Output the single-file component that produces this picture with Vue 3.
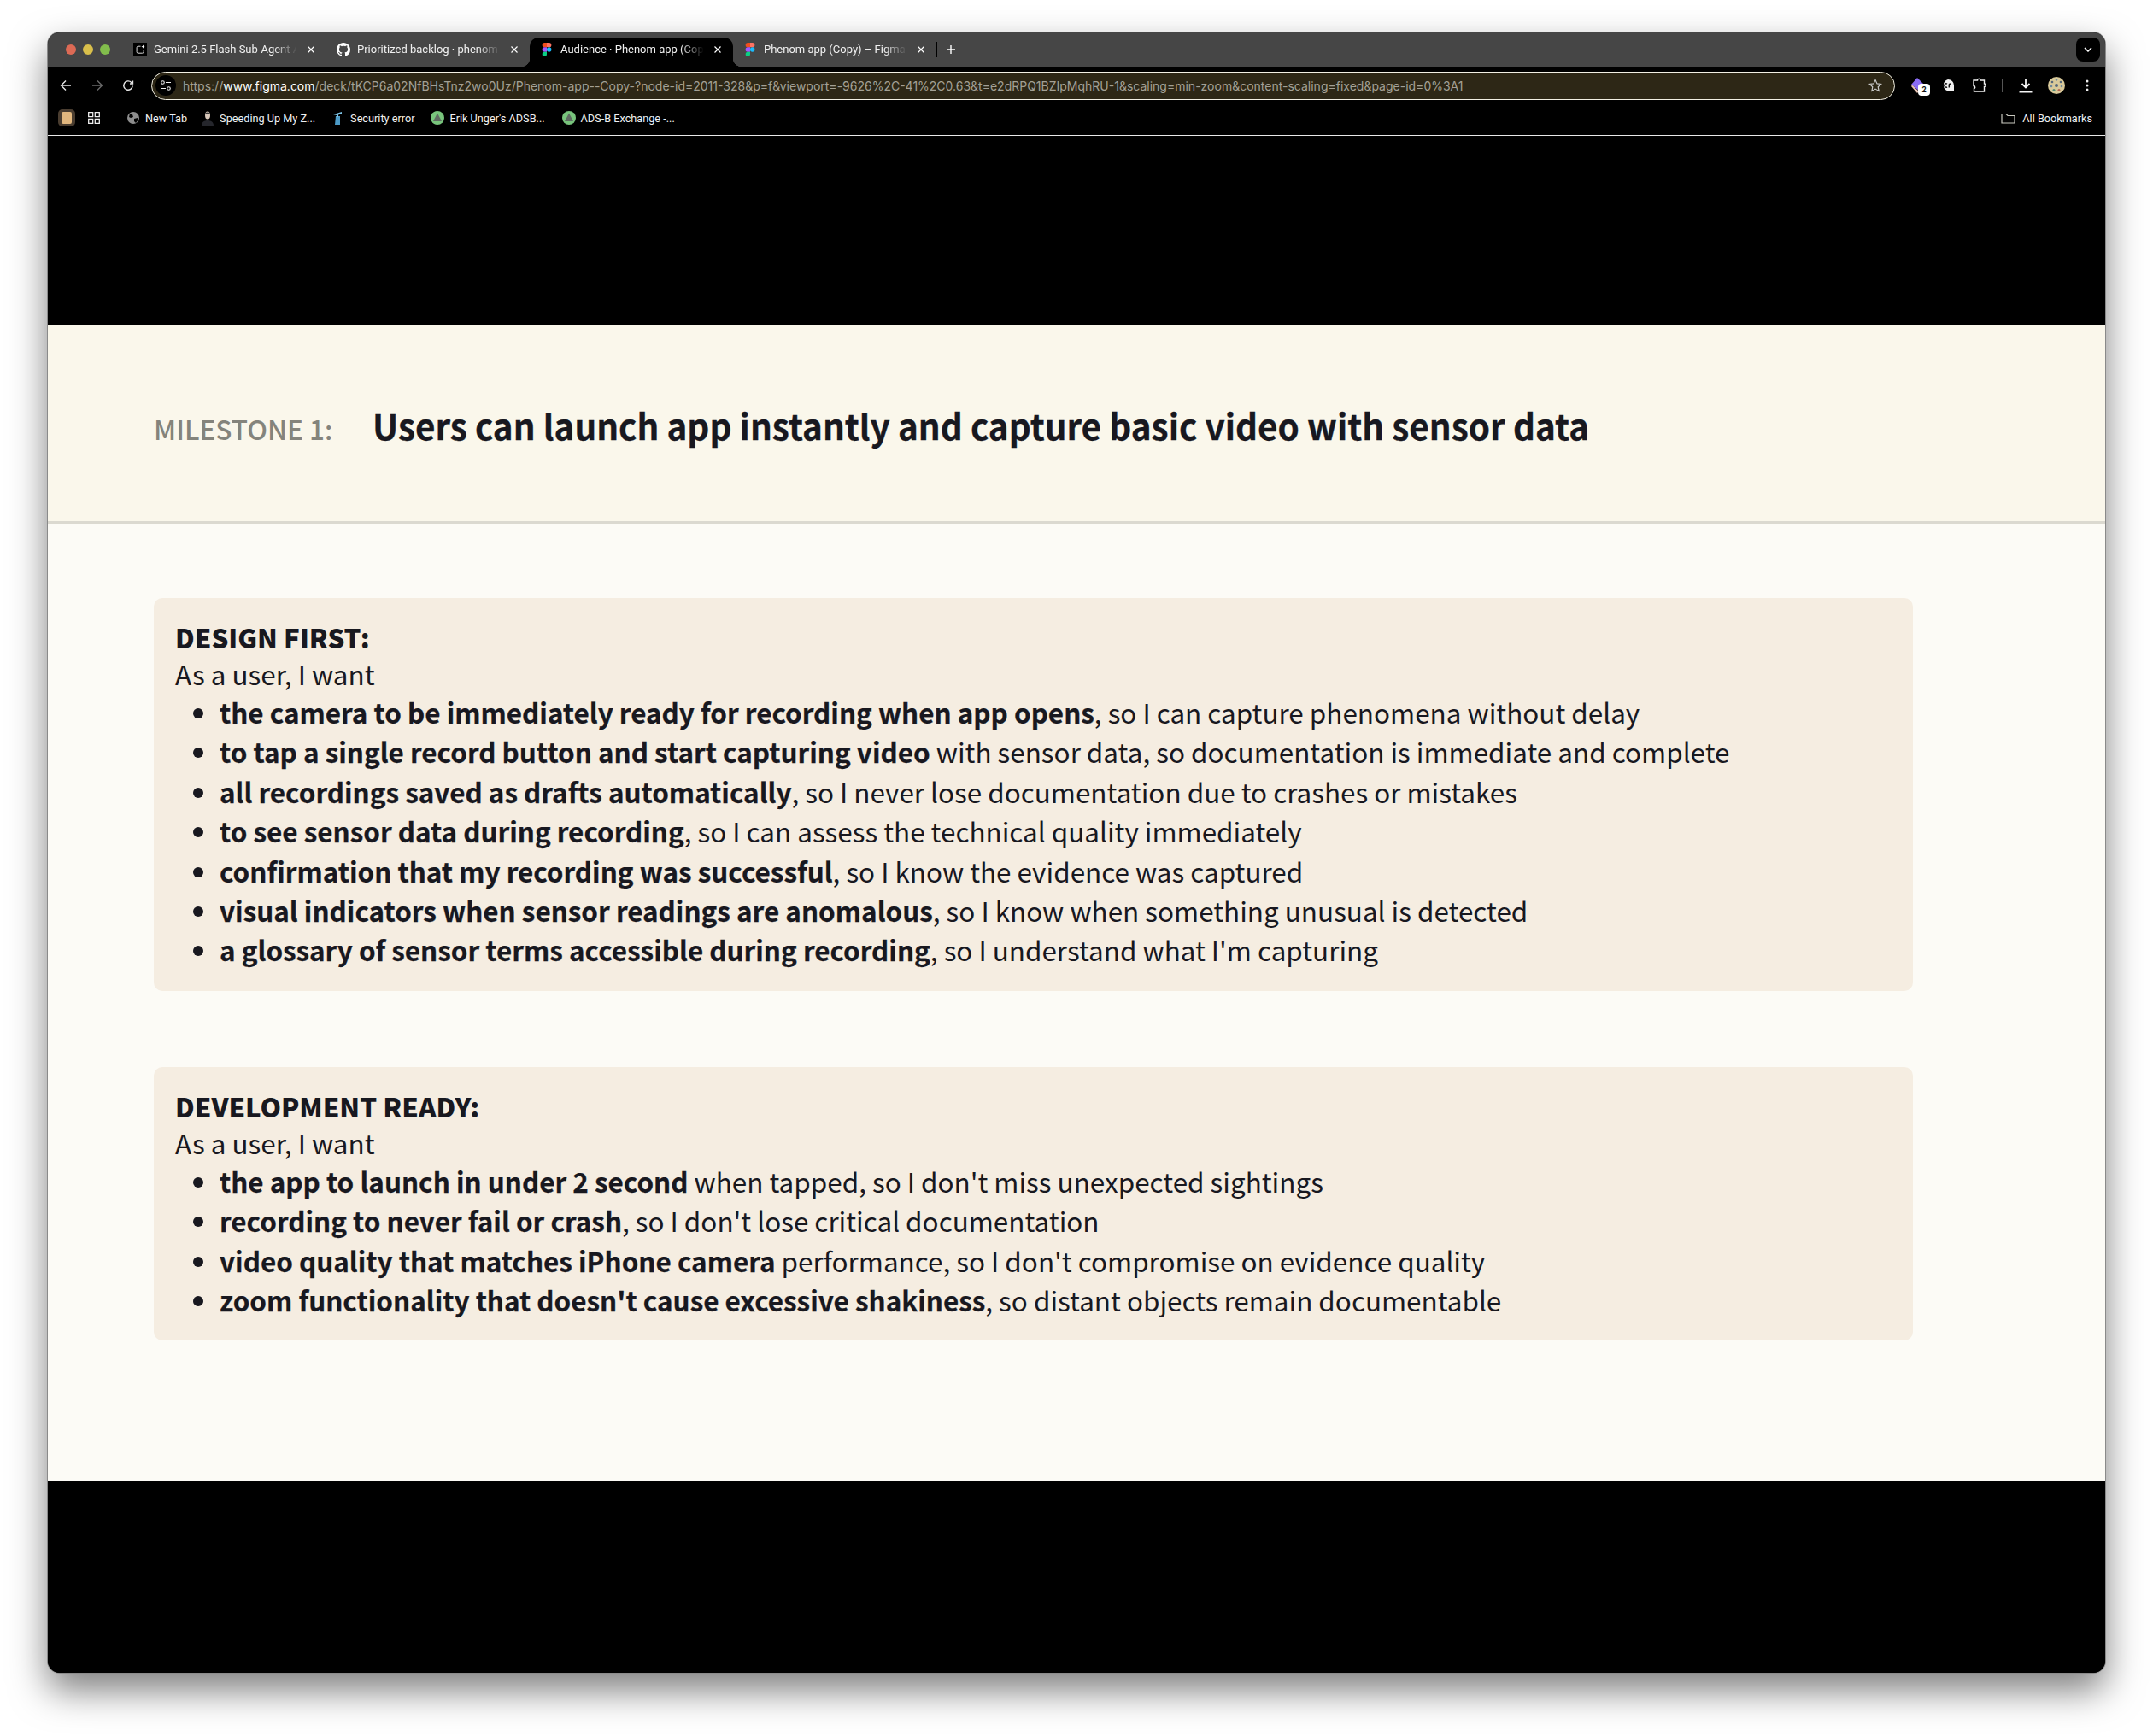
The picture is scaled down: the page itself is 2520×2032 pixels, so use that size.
<script setup>
const cards = [
  {
    title: 'DESIGN FIRST:',
    items: [
      ['the camera to be immediately ready for recording when app opens', ', so I can capture phenomena without delay'],
      ['to tap a single record button and start capturing video', ' with sensor data, so documentation is immediate and complete'],
      ['all recordings saved as drafts automatically', ', so I never lose documentation due to crashes or mistakes'],
      ['to see sensor data during recording', ', so I can assess the technical quality immediately'],
      ['confirmation that my recording was successful', ', so I know the evidence was captured'],
      ['visual indicators when sensor readings are anomalous', ', so I know when something unusual is detected'],
      ['a glossary of sensor terms accessible during recording', ", so I understand what I'm capturing"],
    ],
  },
  {
    title: 'DEVELOPMENT READY:',
    items: [
      ['the app to launch in under 2 second', " when tapped, so I don't miss unexpected sightings"],
      ['recording to never fail or crash', ", so I don't lose critical documentation"],
      ['video quality that matches iPhone camera', " performance, so I don't compromise on evidence quality"],
      ["zoom functionality that doesn't cause excessive shakiness", ', so distant objects remain documentable'],
    ],
  },
]
const tabs = [
  { title: 'Gemini 2.5 Flash Sub-Agent Architecture', icon: 'gemini' },
  { title: 'Prioritized backlog · phenom-app', icon: 'github' },
  { title: 'Audience · Phenom app (Copy) – Figma', icon: 'figma', active: true },
  { title: 'Phenom app (Copy) – Figma Slides', icon: 'figma' },
]
</script>

<template>
  <div class="window">
    <div class="tabstrip">
      <div class="lights"><i class="red"></i><i class="yellow"></i><i class="green"></i></div>
      <div v-for="t in tabs" :key="t.title" class="tab" :class="{ active: t.active }">
        <svg v-if="t.icon === 'gemini'" class="fav" viewBox="0 0 16 16">
          <rect width="16" height="16" fill="#000" />
          <path d="M8.5 4.2H5.6a1.5 1.5 0 0 0-1.5 1.5v5a1.5 1.5 0 0 0 1.5 1.5h5a1.5 1.5 0 0 0 1.5-1.5V8" fill="none" stroke="#ddd" stroke-width="1" />
          <path d="M11.5 2.6l.6 1.5 1.5.6-1.5.6-.6 1.5-.6-1.5-1.5-.6 1.5-.6z" fill="#fff" />
        </svg>
        <svg v-else-if="t.icon === 'github'" class="fav" viewBox="0 0 16 16">
          <path fill="#fff" d="M8 0C3.58 0 0 3.58 0 8c0 3.54 2.29 6.53 5.47 7.59.4.07.55-.17.55-.38 0-.19-.01-.82-.01-1.49-2.01.37-2.53-.49-2.69-.94-.09-.23-.48-.94-.82-1.13-.28-.15-.68-.52-.01-.53.63-.01 1.08.58 1.23.82.72 1.21 1.87.87 2.33.66.07-.52.28-.87.51-1.07-1.78-.2-3.64-.89-3.64-3.95 0-.87.31-1.59.82-2.15-.08-.2-.36-1.02.08-2.12 0 0 .67-.21 2.2.82.64-.18 1.32-.27 2-.27.68 0 1.36.09 2 .27 1.53-1.04 2.2-.82 2.2-.82.44 1.1.16 1.92.08 2.12.51.56.82 1.27.82 2.15 0 3.07-1.87 3.75-3.65 3.95.29.25.54.73.54 1.48 0 1.07-.01 1.93-.01 2.2 0 .21.15.46.55.38A8.013 8.013 0 0 0 16 8c0-4.42-3.58-8-8-8z" />
        </svg>
        <svg v-else class="fav" viewBox="0 0 16 16">
          <path d="M5.300 0h2.700v5.300H5.300a2.650 2.650 0 0 1 0-5.300z" fill="#f24e1e" />
          <path d="M8 0h2.700a2.650 2.650 0 0 1 0 5.300H8z" fill="#ff7262" />
          <path d="M5.300 5.300H8v5.400H5.300a2.700 2.700 0 0 1 0-5.400z" fill="#a259ff" />
          <circle cx="10.700" cy="8" r="2.700" fill="#1abcfe" />
          <path d="M5.300 10.700H8v2.650a2.650 2.650 0 1 1-2.700-2.650z" fill="#0acf83" />
        </svg>
        <span class="tabtitle">{{ t.title }}</span>
        <svg class="close" viewBox="0 0 10 10"><path d="M1.500 1.500l7 7M8.500 1.500l-7 7" stroke="#fff" stroke-width="1.200" /></svg>
      </div>
      <b class="divider"></b>
      <svg class="plus" viewBox="0 0 12 12"><path d="M6 1v10M1 6h10" stroke="#fff" stroke-width="1.400" /></svg>
      <div class="chev"><svg viewBox="0 0 10 6" width="10" height="6"><path d="M1 1l4 4 4-4" fill="none" stroke="#fff" stroke-width="1.500" /></svg></div>
    </div>

    <div class="toolbar">
      <svg class="nav" viewBox="0 0 16 16"><path d="M14 8H2.500M8 2.500L2.500 8 8 13.500" fill="none" stroke="#e6e6e6" stroke-width="1.400" /></svg>
      <svg class="nav" viewBox="0 0 16 16"><path d="M2 8h11.500M8 2.500L13.500 8 8 13.500" fill="none" stroke="#6a6a6a" stroke-width="1.400" /></svg>
      <svg class="nav reload" viewBox="0 0 16 16"><path d="M13.200 8.400a5.200 5.200 0 1 1-1.500-4L13.500 6M13.500 2.400V6H10" fill="none" stroke="#e6e6e6" stroke-width="1.400" /></svg>
      <div class="omnibox">
        <span class="chip">
          <svg viewBox="0 0 14 14" width="14" height="14"><circle cx="3.500" cy="3.500" r="1.800" fill="none" stroke="#eee" stroke-width="1.100" /><path d="M7 3.500h6M1 10.500h6" stroke="#eee" stroke-width="1.100" /><circle cx="10.500" cy="10.500" r="1.800" fill="none" stroke="#eee" stroke-width="1.100" /></svg>
        </span>
        <span class="url">https://<em>www.figma.com</em>/deck/tKCP6a02NfBHsTnz2wo0Uz/Phenom-app--Copy-?node-id=2011-328&amp;p=f&amp;viewport=-9626%2C-41%2C0.63&amp;t=e2dRPQ1BZIpMqhRU-1&amp;scaling=min-zoom&amp;content-scaling=fixed&amp;page-id=0%3A1</span>
        <svg class="star" viewBox="0 0 16 16"><path d="M8 1.600l2 4.300 4.700.6-3.500 3.200.9 4.700L8 12.100l-4.100 2.300.9-4.700L1.300 6.500l4.700-.6z" fill="none" stroke="#c8c8c8" stroke-width="1.200" /></svg>
      </div>
      <div class="tools">
        <div class="extwrap">
          <svg width="18" height="20" viewBox="0 0 18 20"><path d="M9 1l8 8-6 7-9-7z" fill="#8a6cf4" /><path d="M3 9.500l8 7.500-2 2-7-8z" fill="#e8c5b5" /></svg>
          <span class="badge">2</span>
        </div>
        <svg class="tool cr" width="16" height="16" viewBox="0 0 16 16"><path d="M8 1a7 7 0 0 1 7 7v6.500H8A7 7 0 0 1 8 1z" fill="#f2f2f2" /><path d="M7 6.200a2.100 2.100 0 1 0 0 3.600M9.300 10.500V7.600c0-1 .7-1.500 2-1.500" fill="none" stroke="#111" stroke-width="1.500" /></svg>
        <svg class="tool puzzle" width="18" height="18" viewBox="0 0 18 18"><path d="M2 3h4.500c0-2.400 3.500-2.400 3.500 0H14.500v4c2.400 0 2.400 3.500 0 3.500v5.500H2.500v-3.500c1.700 0 1.700-3-.5-3z" fill="none" stroke="#f0f0f0" stroke-width="1.400" /></svg>
        <b class="vsep"></b>
        <svg class="tool dl" width="18" height="18" viewBox="0 0 18 18"><path d="M9 1v10M4.500 7L9 11.500 13.500 7M1.500 16.500h15" fill="none" stroke="#f4f4f4" stroke-width="1.800" /></svg>
        <svg class="tool avatar" width="20" height="20" viewBox="0 0 20 20">
          <circle cx="10" cy="10" r="10" fill="#d8c99a" />
          <circle cx="10" cy="10" r="2" fill="#56687a" /><circle cx="5" cy="6" r="1.300" fill="#56687a" /><circle cx="15" cy="6" r="1.300" fill="#56687a" /><circle cx="10" cy="3.500" r="1.200" fill="#6f8aa0" /><circle cx="4" cy="11" r="1.300" fill="#6f8aa0" /><circle cx="16" cy="11" r="1.300" fill="#6f8aa0" /><circle cx="7" cy="15.500" r="1.500" fill="#4f8a74" /><circle cx="13" cy="15.500" r="1.500" fill="#b5654f" />
        </svg>
        <svg class="tool kebab" width="4" height="14" viewBox="0 0 4 14"><circle cx="2" cy="2" r="1.500" fill="#eee" /><circle cx="2" cy="7" r="1.500" fill="#eee" /><circle cx="2" cy="12" r="1.500" fill="#eee" /></svg>
      </div>
    </div>

    <div class="bookmarks">
      <span class="tile"><i></i></span>
      <svg class="gridicon" width="14" height="14" viewBox="0 0 14 14"><path d="M.7.700h5v5h-5zM8.300.700h5v5h-5zM.7 8.300h5v5h-5zM8.300 8.300h5v5h-5z" fill="none" stroke="#eee" stroke-width="1.300" /></svg>
      <b class="bmsep"></b>
      <div class="bm first">
        <svg width="14" height="14" viewBox="0 0 14 14"><circle cx="7" cy="7" r="7" fill="#8d8d8d" /><path d="M3 2l3 1 1 3-3 1-2-1zM8 8l4-1 1 2-3 4-2-2z" fill="#000" /></svg>
        New Tab
      </div>
      <div class="bm face">
        <svg width="14" height="17" viewBox="0 0 14 17"><ellipse cx="7" cy="5" rx="3" ry="4.500" fill="#d9c8ba" /><path d="M4 3.500C4 .8 10 .8 10 3.500z" fill="#333" /><path d="M0 17c0-4 3-6 7-6s7 2 7 6z" fill="#25262c" /></svg>
        Speeding Up My Z...
      </div>
      <div class="bm sec">
        <svg width="12" height="17" viewBox="0 0 12 17"><path d="M4 6h5v10H3z" fill="#4c9bc7" /><path d="M1 4l10-3v2l-4 1.500V7H5V5z" fill="#7cc2e4" /></svg>
        Security error
      </div>
      <div class="bm adsb">
        <svg width="16" height="16" viewBox="0 0 16 16"><circle cx="8" cy="8" r="8" fill="#78c47c" /><path d="M8 2.500L13 12H3z" fill="#5f6b62" /></svg>
        Erik Unger's ADSB...
      </div>
      <div class="bm adsx">
        <svg width="16" height="16" viewBox="0 0 16 16"><circle cx="8" cy="8" r="8" fill="#78c47c" /><path d="M8 2.500L13 12H3z" fill="#5f6b62" /></svg>
        ADS-B Exchange -...
      </div>
      <b class="bmsep right"></b>
      <div class="bm all">
        <svg width="17" height="13" viewBox="0 0 17 13"><path d="M1 1.500h5l2 2h8v8.500H1z" fill="none" stroke="#c9c9c0" stroke-width="1.200" /></svg>
        All Bookmarks
      </div>
    </div>

    <main class="slide">
      <header class="head">
        <span class="label">MILESTONE 1:</span>
        <h1>Users can launch app instantly and capture basic video with sensor data</h1>
      </header>
      <section class="body">
        <article v-for="c in cards" :key="c.title" class="card">
          <div class="ctitle">{{ c.title }}</div>
          <div class="intro">As a user, I want</div>
          <ul>
            <li v-for="it in c.items" :key="it[0]"><strong>{{ it[0] }}</strong>{{ it[1] }}</li>
          </ul>
        </article>
      </section>
    </main>
    <div class="bottom"></div>
  </div>
</template>

<style>
html, body { background: #fff; }
</style>

<style scoped>
.window {
  box-sizing: border-box;
  width: 2408px;
  height: 1920px;
  margin: 38px 0 74px 56px;
  border-radius: 14px;
  background: #000;
  box-shadow: 0 0 0 1px #8a8a8a, 0 20px 44px rgba(0, 0, 0, .52);
  overflow: hidden;
  display: flex;
  flex-direction: column;
  font-family: "Roboto", "Liberation Sans", sans-serif;
  color: #fff;
}
.tabstrip {
  height: 40px;
  flex: none;
  background: #464646;
  display: flex;
  align-items: flex-end;
  position: relative;
}
.lights { display: flex; gap: 8px; width: 88px; padding-left: 21px; box-sizing: border-box; height: 40px; align-items: center; }
.lights i { width: 12px; height: 12px; border-radius: 50%; }
.red { background: #dd6a55; }
.yellow { background: #d9bf4b; }
.green { background: #82bd4c; }
.tab {
  width: 238px;
  height: 34px;
  box-sizing: border-box;
  padding: 0 9px 6px 12px;
  display: flex;
  align-items: center;
  border-radius: 10px 10px 0 0;
  position: relative;
  flex: none;
}
.tab.active { background: #000; }
.tab.active::before, .tab.active::after {
  content: "";
  position: absolute;
  bottom: 0;
  width: 10px;
  height: 10px;
  background: radial-gradient(circle at 0 0, transparent 10px, #000 10.500px);
}
.tab.active::before { left: -10px; }
.tab.active::after { right: -10px; transform: scaleX(-1); }
.fav { width: 16px; height: 16px; flex: none; }
.tabtitle {
  flex: 1;
  min-width: 0;
  margin-left: 8px;
  font-size: 13px;
  line-height: 18px;
  white-space: nowrap;
  overflow: hidden;
  color: #f0f0f0;
  -webkit-mask-image: linear-gradient(90deg, #000 82%, transparent 98%);
  mask-image: linear-gradient(90deg, #000 82%, transparent 98%);
}
.close { width: 10px; height: 10px; flex: none; margin: 0 4px 0 8px; }
.divider { width: 1px; height: 18px; background: #000; align-self: center; flex: none; }
.plus { width: 12px; height: 12px; flex: none; align-self: center; margin-left: 10px; }
.chev {
  position: absolute;
  right: 6px;
  top: 6px;
  width: 28px;
  height: 28px;
  background: #000;
  border-radius: 8px;
  display: flex;
  align-items: center;
  justify-content: center;
}
.toolbar {
  height: 44px;
  flex: none;
  background: #000;
  border-radius: 10px 10px 0 0;
  display: flex;
  align-items: center;
  box-sizing: border-box;
  padding: 0 14px 0 13px;
}
.nav { width: 16px; height: 16px; flex: none; margin-right: 21px; }
.nav.reload { margin-left: -1px; margin-right: 22px; }
.omnibox {
  margin-left: -3px;
  width: 2041px;
  height: 33px;
  box-sizing: border-box;
  border: 1px solid #f2efe3;
  border-radius: 17px;
  background: #2d2716;
  display: flex;
  align-items: center;
  flex: none;
  padding: 0 14px 0 4px;
}
.chip {
  width: 24px;
  height: 24px;
  border-radius: 50%;
  background: #000;
  display: flex;
  align-items: center;
  justify-content: center;
  flex: none;
}
.url {
  flex: 1;
  margin-left: 8px;
  padding-top: 2px;
  font-family: "Inter", "Roboto", sans-serif;
  font-size: 14px;
  line-height: 20px;
  white-space: nowrap;
  overflow: hidden;
  color: #a3a095;
}
.url em { font-style: normal; color: #fff; font-weight: 400; }
.star { width: 16px; height: 16px; flex: none; }
.tools { flex: 1; display: flex; align-items: center; position: relative; height: 44px; }
.extwrap { position: relative; margin-left: 17px; width: 18px; height: 20px; flex: none; }
.badge {
  position: absolute;
  left: 10px;
  top: 8px;
  width: 14px;
  height: 14px;
  background: #fff;
  color: #111;
  border-radius: 4px;
  font-size: 9px;
  font-weight: 700;
  text-align: center;
  line-height: 14px;
}
.tool { flex: none; }
.cr { margin-left: 19px; }
.puzzle { margin-left: 20px; }
.vsep { width: 1px; height: 16px; background: #555; margin-left: 17px; flex: none; }
.dl { margin-left: 18px; }
.avatar { margin-left: 17px; }
.kebab { margin-left: 24px; }
.bookmarks {
  height: 32px;
  flex: none;
  background: #000;
  border-bottom: 1px solid #e8e8e8;
  padding-bottom: 4px;
  display: flex;
  align-items: center;
  padding-left: 12px;
  padding-right: 15px;
  font-size: 12.700px;
}
.tile {
  width: 20px;
  height: 20px;
  border-radius: 5px;
  background: #4a3d30;
  display: flex;
  align-items: center;
  justify-content: center;
  flex: none;
}
.tile i { width: 12px; height: 14px; background: #e2b77e; border-radius: 2px; }
.gridicon { margin-left: 15px; flex: none; }
.bmsep { width: 1px; height: 18px; background: #444; margin-left: 16px; flex: none; }
.bmsep.right { margin-left: auto; }
.bm { display: flex; align-items: center; gap: 7px; white-space: nowrap; color: #f0f0f0; }
.bm svg { flex: none; }
.first { margin-left: 15px; }
.face { margin-left: 17px; }
.sec { margin-left: 20px; gap: 9px; }
.adsb { margin-left: 19px; gap: 6px; }
.adsx { margin-left: 20px; gap: 6px; }
.all { margin-left: 17px; gap: 8px; }
.slide {
  margin-top: 222px;
  height: 1353px;
  flex: none;
  background: #fcfbf6;
  font-family: "Noto Sans CJK SC", "Noto Sans", sans-serif;
  color: #18181f;
  font-size: 31.440px;
  line-height: 46.400px;
}
.head {
  height: 232px;
  box-sizing: border-box;
  background: #faf7eb;
  border-bottom: 3px solid #dbd9d0;
  padding-left: 124px;
  display: flex;
  align-items: center;
}
.label { color: #84847c; font-size: 31.500px; font-weight: 500; width: 256px; flex: none; position: relative; top: 6px; }
h1 { margin: 0; font-size: 40.450px; font-weight: 700; line-height: 56px; color: #18181f; position: relative; top: 2px; -webkit-text-stroke: .3px #18181f; }
.body { padding: 87px 0 0 124px; display: flex; flex-direction: column; gap: 89px; }
.card {
  width: 2059px;
  box-sizing: border-box;
  padding: 24px 25px 24px;
  background: #f5ede1;
  border-radius: 10px;
}
.ctitle { font-weight: 900; font-size: 31.200px; line-height: 43px; }
.intro { line-height: 44px; }
ul { margin: 0; padding: 0 0 0 52px; }
strong { font-weight: 700; -webkit-text-stroke: .25px #18181f; }
.bottom { flex: 1; background: #000; }
</style>
